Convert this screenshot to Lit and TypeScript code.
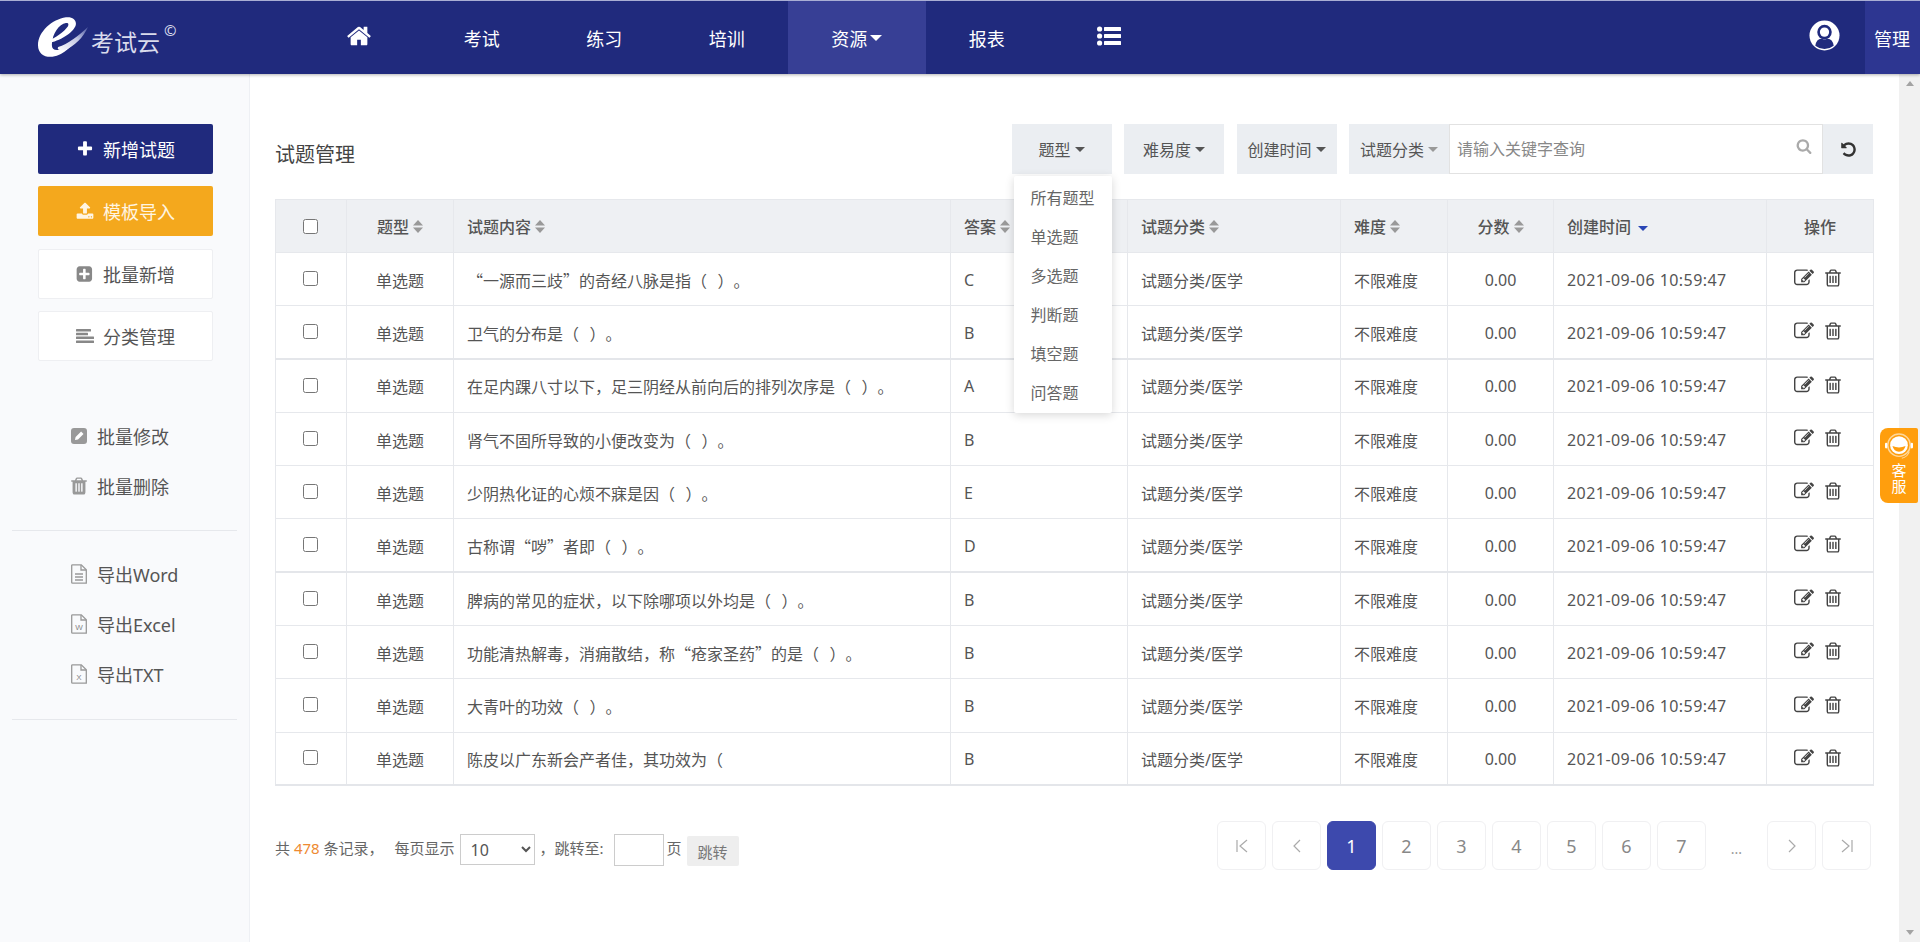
import { LitElement, html, css, svg } from 'lit';
import { customElement } from 'lit/decorators.js';

const fa = (d: string, cls = '') => html`<svg class=${cls} viewBox="0 0 1792 1792" fill="currentColor"><path d=${d}></path></svg>`;

const HOME = 'M1472 992v480q0 26-19 45t-45 19h-384v-384h-256v384h-384q-26 0-45-19t-19-45v-480q0-1 .5-3t.5-3l575-474 575 474q1 2 1 6zm223-69l-62 74q-8 9-21 11h-3q-13 0-21-7l-692-577-692 577q-12 8-24 7-13-2-21-11l-62-74q-8-10-7-23.500t11-21.500l719-599q32-26 76-26t76 26l244 204v-195q0-14 9-23t23-9h192q14 0 23 9t9 23v408l219 182q10 8 11 21.500t-7 23.500z';
const EDIT = 'M888 1184l116-116-152-152-116 116v56h96v96h56zm440-720q-16-16-33 1l-350 350q-17 17-1 33t33-1l350-350q17-17 1-33zm80 594v190q0 119-84.500 203.500t-203.500 84.500h-832q-119 0-203.500-84.500t-84.500-203.500v-832q0-119 84.500-203.500t203.500-84.500h832q63 0 117 25 15 7 18 23 3 17-9 29l-49 49q-14 14-32 8-23-6-45-6h-832q-66 0-113 47t-47 113v832q0 66 47 113t113 47h832q66 0 113-47t47-113v-126q0-13 9-22l64-64q15-15 35-7t20 29zm-96-738l288 288-672 672h-288v-288zm444 132l-92 92-288-288 92-92q28-28 68-28t68 28l152 152q28 28 28 68t-28 68z';
const TRASH_O = 'M704 736v576q0 14-9 23t-23 9h-64q-14 0-23-9t-9-23v-576q0-14 9-23t23-9h64q14 0 23 9t9 23zm256 0v576q0 14-9 23t-23 9h-64q-14 0-23-9t-9-23v-576q0-14 9-23t23-9h64q14 0 23 9t9 23zm256 0v576q0 14-9 23t-23 9h-64q-14 0-23-9t-9-23v-576q0-14 9-23t23-9h64q14 0 23 9t9 23zm128 724v-948h-896v948q0 22 7 40.500t14.500 27 10.500 8.500h832q3 0 10.500-8.500t14.500-27 7-40.500zm-672-1076h448l-48-117q-7-9-17-11h-317q-10 2-17 11zm928 32v64q0 14-9 23t-23 9h-96v948q0 83-47 143.500t-113 60.500h-832q-66 0-113-58.500t-47-141.500v-952h-96q-14 0-23-9t-9-23v-64q0-14 9-23t23-9h309l70-167q15-37 54-63t79-26h320q40 0 79 26t54 63l70 167h309q14 0 23 9t9 23z';
const TRASH = 'M704 1376v-704q0-14-9-23t-23-9h-64q-14 0-23 9t-9 23v704q0 14 9 23t23 9h64q14 0 23-9t9-23zm256 0v-704q0-14-9-23t-23-9h-64q-14 0-23 9t-9 23v704q0 14 9 23t23 9h64q14 0 23-9t9-23zm256 0v-704q0-14-9-23t-23-9h-64q-14 0-23 9t-9 23v704q0 14 9 23t23 9h64q14 0 23-9t9-23zm-544-992h448l-48-117q-7-9-17-11h-317q-10 2-17 11zm928 32v64q0 14-9 23t-23 9h-96v948q0 83-47 143.500t-113 60.500h-832q-66 0-113-58.500t-47-141.500v-952h-96q-14 0-23-9t-9-23v-64q0-14 9-23t23-9h309l70-167q15-37 54-63t79-26h320q40 0 79 26t54 63l70 167h309q14 0 23 9t9 23z';
const PLUS = 'M1600 736v192q0 40-28 68t-68 28h-416v416q0 40-28 68t-68 28h-192q-40 0-68-28t-28-68v-416h-416q-40 0-68-28t-28-68v-192q0-40 28-68t68-28h416v-416q0-40 28-68t68-28h192q40 0 68 28t28 68v416h416q40 0 68 28t28 68z';
const UPLOAD = 'M1344 1472q0-26-19-45t-45-19-45 19-19 45 19 45 45 19 45-19 19-45zm256 0q0-26-19-45t-45-19-45 19-19 45 19 45 45 19 45-19 19-45zm128-224v320q0 40-28 68t-68 28h-1472q-40 0-68-28t-28-68v-320q0-40 28-68t68-28h427q21 56 70.500 92t110.500 36h256q61 0 110.500-36t70.500-92h427q40 0 68 28t28 68zm-325-648q-17 40-59 40h-256v448q0 26-19 45t-45 19h-256q-26 0-45-19t-19-45v-448h-256q-42 0-59-40-17-39 14-69l448-448q18-19 45-19t45 19l448 448q31 30 14 69z';
const PLUS_SQ = 'M1344 960v-128q0-26-19-45t-45-19h-320v-320q0-26-19-45t-45-19h-128q-26 0-45 19t-19 45v320h-320q-26 0-45 19t-19 45v128q0 26 19 45t45 19h320v320q0 26 19 45t45 19h128q26 0 45-19t19-45v-320h320q26 0 45-19t19-45zm256-544v960q0 119-84.500 203.500t-203.500 84.500h-960q-119 0-203.500-84.500t-84.500-203.500v-960q0-119 84.500-203.500t203.500-84.500h960q119 0 203.500 84.500t84.500 203.500z';
const SEARCH = 'M1216 832q0-185-131.500-316.500t-316.500-131.500-316.500 131.500-131.500 316.500 131.500 316.500 316.500 131.500 316.500-131.500 131.500-316.500zm512 832q0 52-38 90t-90 38q-54 0-90-38l-343-342q-179 124-399 124-143 0-273.500-55.500t-225-150-150-225-55.500-273.500 55.500-273.500 150-225 225-150 273.500-55.500 273.500 55.500 225 150 150 225 55.500 273.500q0 220-124 399l343 343q37 37 37 90z';
const UNDO = 'M1664 896q0 156-61 298t-164 245-245 164-298 61q-172 0-327-72.500t-264-204.500q-7-10-6.500-22.500t8.500-20.500l137-138q10-9 25-9 16 2 23 12 73 95 179 147t225 52q104 0 198.500-40.500t163.500-109.500 109.500-163.500 40.500-198.500-40.500-198.500-109.500-163.500-163.500-109.500-198.500-40.500q-98 0-188 35.500t-160 101.500l137 138q31 30 14 69-17 40-59 40h-448q-26 0-45-19t-19-45v-448q0-42 40-59 39-17 69 14l130 129q107-101 244.500-156.500t284.500-55.500q156 0 298 61t245 164 164 245 61 298z';

const listIcon = html`<svg class="i-list" viewBox="0 0 24 20" fill="currentColor">
  <circle cx="2.600" cy="3" r="2.600"></circle><circle cx="2.600" cy="10" r="2.600"></circle><circle cx="2.600" cy="17" r="2.600"></circle>
  <rect x="7" y="1" width="17" height="4" rx=".6"></rect><rect x="7" y="8" width="17" height="4" rx=".6"></rect><rect x="7" y="15" width="17" height="4" rx=".6"></rect>
</svg>`;

const userIcon = html`<svg class="i-user" viewBox="0 0 32 32">
  <circle cx="16" cy="16" r="15.500" fill="#fff"></circle>
  <circle cx="16" cy="12.500" r="7.500" fill="#202a7d"></circle>
  <circle cx="16" cy="12.500" r="4.800" fill="#fff"></circle>
  <path d="M6.500 26.500q1-7 6.500-7.500 3 2 6 0 5.500.5 6.500 7.500-4.500 3.500-9.500 3.500t-9.500-3.500z" fill="#202a7d"></path>
</svg>`;

const alignIcon = html`<svg class="i-side" viewBox="0 0 18 14" fill="currentColor" style="height:14px">
  <rect width="15" height="2.400" rx=".5"></rect><rect y="3.800" width="12" height="2.400" rx=".5"></rect><rect y="7.600" width="18" height="2.400" rx=".5"></rect><rect y="11.500" width="18" height="2.400" rx=".5"></rect>
</svg>`;

const pencilBoxIcon = html`<svg class="i-link" viewBox="0 0 16 16">
  <rect width="16" height="16" rx="3" fill="#999"></rect>
  <path d="M4 12l.6-3 5.500-5.500 2.400 2.400L7 11.400z" fill="#fff"></path>
</svg>`;

const fileIcon = (inner: unknown) => html`<svg class="i-link i-file" viewBox="0 0 16 20">
  <path d="M1.500.8h8.800l5 5v13.400H1.500a.8.800 0 0 1-.8-.8V1.600a.8.800 0 0 1 .8-.8z" fill="none" stroke="#999" stroke-width="1.300"></path>
  <path d="M10 1v5h5" fill="none" stroke="#999" stroke-width="1.300"></path>
  ${inner}
</svg>`;

const wordLines = svg`<path d="M4 10h8M4 13h8M4 16h8" stroke="#999" stroke-width="1.300"></path>`;
const letter = (c: string) => svg`<text x="8" y="16" font-size="8" font-family="Liberation Sans, sans-serif" text-anchor="middle" fill="#888">${c}</text>`;

const logo = html`<svg class="logo-e" viewBox="0 0 52 42">
  <defs><linearGradient id="sw" x1="0" x2="1" y1="1" y2="0"><stop offset="0" stop-color="#fff"></stop><stop offset=".55" stop-color="#c4c8e4"></stop><stop offset="1" stop-color="#4a55a0"></stop></linearGradient></defs>
  <path d="M9 27C19 26 35 18 39 9 41 3 36-1 29 0 15 2 0 15 0 29c0 9 7 13 15 12 13-2 21-12 25-20-6 7-13 12-19 13-5 .5-7-2-6.500-6.500C15 17 22 7 29 6c3-.5 3 1.500 2 3.500C27 15 18 22 9 25z" fill="#fff"></path>
  <path d="M21 31c10-3 21-12 31-21-5 11-14 20-24 24-4 1-9 0-7-3z" fill="url(#sw)"></path>
</svg>`;

const kefuIcon = html`<svg class="kefu-i" viewBox="0 0 32 30">
  <circle cx="16" cy="13" r="12" fill="none" stroke="#ffd79a" stroke-width="1.500"></circle>
  <circle cx="16" cy="13" r="9.500" fill="#fff"></circle>
  <path d="M9 14q7 3 14 0-1.500 6-7 6t-7-6z" fill="#ff9e0d"></path>
  <rect x="1" y="10.500" width="2.500" height="6" rx="1.200" fill="#fff"></rect>
  <rect x="28.500" y="10.500" width="2.500" height="6" rx="1.200" fill="#fff"></rect>
  <path d="M27 20q-2 6-8 7" fill="none" stroke="#ffd79a" stroke-width="1.200"></path>
</svg>`;

const sortIcon = html`<svg class="sort" viewBox="0 0 10 13" fill="#999"><path d="M5 0l5 5.500H0z"></path><path d="M5 13l5-5.500H0z"></path></svg>`;

const pagerArrow = (d: string) => html`<svg class="pg-i" viewBox="0 0 16 16" fill="none" stroke="#aaa" stroke-width="1.200"><path d=${d}></path></svg>`;

const QUESTIONS: [string, string][] = [
  ['“一源而三歧”的奇经八脉是指（ ）。', 'C'],
  ['卫气的分布是（ ）。', 'B'],
  ['在足内踝八寸以下，足三阴经从前向后的排列次序是（ ）。', 'A'],
  ['肾气不固所导致的小便改变为（ ）。', 'B'],
  ['少阴热化证的心烦不寐是因（ ）。', 'E'],
  ['古称谓“哕”者即（ ）。', 'D'],
  ['脾病的常见的症状，以下除哪项以外均是（ ）。', 'B'],
  ['功能清热解毒，消痈散结，称“疮家圣药”的是（ ）。', 'B'],
  ['大青叶的功效（ ）。', 'B'],
  ['陈皮以广东新会产者佳，其功效为（', 'B'],
];

@customElement('app-root')
export class AppRoot extends LitElement {
  static styles = css`
    :host {
      display: block;
      height: 100vh;
      overflow: hidden;
      font-family: "Noto Sans", "Noto Sans CJK SC", sans-serif;
      font-size: 16px;
      color: #555;
      background: #fff;
      text-spacing-trim: space-all;
    }
    svg { display: block; flex: none; }

    .top {
      height: 74px;
      box-sizing: border-box;
      border-top: 1px solid #a9aed4;
      background: #202a7d;
      color: #fff;
      display: flex;
      align-items: stretch;
      box-shadow: 0 1px 3px rgba(0, 0, 0, .3);
      position: relative;
      z-index: 2;
    }
    .brand {
      width: 298px;
      box-sizing: border-box;
      padding: 16px 0 0 38px;
      display: flex;
      align-items: flex-start;
    }
    .logo-e { width: 50px; height: 41px; }
    .brand-name {
      font-size: 23px;
      line-height: 1;
      color: #d9dbec;
      margin: 14px 0 0 3px;
      white-space: nowrap;
    }
    .brand-c { font-size: 15px; line-height: 1; color: #d9dbec; margin: 6px 0 0 4px; }
    .nav { display: flex; flex: 1; }
    .nav a {
      width: 122.500px;
      display: flex;
      align-items: center;
      justify-content: center;
      font-size: 18px;
      gap: 3px;
    }
    .nav a.on { width: 137.500px; background: #373f95; }
    .caret { width: 0; height: 0; border: 6px solid transparent; border-top-color: currentColor; border-bottom: 0; }
    .caret.sm { border-width: 5px 5px 0; }
    .i-home { width: 26px; height: 26px; margin-top: -4px; }
    .i-list { width: 24px; height: 20px; margin-top: -4px; }
    .user { width: 82px; display: flex; align-items: center; justify-content: center; padding-bottom: 5px; }
    .i-user { width: 31px; height: 31px; }
    .manage {
      width: 55px;
      background: #2d3691;
      display: flex;
      align-items: center;
      padding-left: 9px;
      box-sizing: border-box;
      font-size: 18px;
    }

    .body { display: flex; height: 868px; }

    .side {
      width: 250px;
      box-sizing: border-box;
      flex: none;
      background: #f9fafc;
      border-right: 1px solid #eef0f4;
      padding: 50px 12px 0;
    }
    .btns { display: flex; flex-direction: column; gap: 12.400px; padding-left: 26px; }
    .btn {
      width: 175px;
      height: 50px;
      box-sizing: border-box;
      border-radius: 2px;
      display: flex;
      align-items: center;
      justify-content: center;
      gap: 9px;
      font-size: 18px;
    }
    .btn.navy { background: #202a7d; color: #fff; }
    .btn.orange { background: #f4a81d; color: #fff5e2; }
    .btn.plain { background: #fff; border: 1px solid #eeeff2; color: #555; }
    .btn svg { width: 18px; height: 18px; }
    .btn.plain svg { color: #888; }
    .group { margin-top: 50px; padding-bottom: 19px; border-bottom: 1px solid #e6e8ec; }
    .group + .group { margin-top: 18px; padding-bottom: 20px; }
    .link {
      height: 50px;
      display: flex;
      align-items: center;
      gap: 10px;
      padding-left: 59px;
      font-size: 18px;
      color: #555;
    }
    .i-link { width: 16px; height: 16px; color: #999; }
    .i-trash { width: 20px; height: 20px; margin: 0 -2px; }
    .i-file { height: 20px; }

    .main { flex: 1; min-width: 0; padding: 50px 26px 0 25px; }
    .tools { display: flex; align-items: center; height: 50px; }
    .title { font-size: 20px; color: #444; flex: 1; padding-top: 8px; }
    .filter {
      position: relative;
      width: 100px;
      height: 50px;
      margin-right: 12.500px;
      background: #ebeef2;
      display: flex;
      align-items: center;
      justify-content: center;
      gap: 4px;
      color: #555;
    }
    .menu {
      position: absolute;
      top: 52px;
      left: 2px;
      width: 98px;
      box-sizing: border-box;
      padding: 3px 0 0;
      background: #fff;
      border-radius: 2px;
      box-shadow: 0 2px 10px rgba(0, 0, 0, .16);
      z-index: 3;
    }
    .menu div { height: 39px; line-height: 39px; padding-left: 17px; color: #666; }
    .search { display: flex; height: 50px; }
    .search .filter { margin-right: 0; }
    .search .filter .caret { color: #999; }
    .kw { position: relative; width: 374px; }
    .kw input {
      width: 100%;
      height: 100%;
      box-sizing: border-box;
      border: 1px solid #e2e2e2;
      padding: 0 40px 0 7px;
      font: inherit;
      outline: none;
    }
    .kw input::placeholder { color: #888; }
    .kw svg { position: absolute; right: 11px; top: 14px; width: 16px; height: 16px; color: #aaa; }
    .reset { width: 50px; background: #ebeef2; display: flex; align-items: center; justify-content: center; color: #333; }
    .reset svg { width: 17px; height: 17px; }

    table { width: 100%; margin-top: 25px; border-collapse: collapse; table-layout: fixed; border-bottom: 2px solid #e4e6ea; }
    th, td { border: 1px solid #e6e8ec; padding: 0 13px; text-align: left; font-weight: 400; white-space: nowrap; overflow: hidden; }
    th { height: 52px; background: #eef0f3; color: #555; font-weight: 500; }
    td { height: 53.300px; color: #555; padding-top: 1px; box-sizing: border-box; }
    td.q { font-family: "Noto Sans CJK SC", sans-serif; word-spacing: 7px; }
    tr.thick td { border-bottom: 2px solid #e4e6ea; }
    th span { display: inline-flex; align-items: center; gap: 4px; }
    .sort { width: 10px; height: 13px; }
    .down { width: 0; height: 0; border: 5px solid transparent; border-top-color: #2a46b5; border-bottom: 0; margin: 5px 0 0 3px; }
    .c { text-align: center; }
    th.chk, td.chk { padding: 0 1px 0 0; text-align: center; }
    td.chk { padding-bottom: 5px; }
    input[type=checkbox] { width: 15px; height: 15px; margin: 0; vertical-align: middle; }
    th.chk input[type=checkbox] { margin-bottom: 2px; }
    .date { letter-spacing: .45px; }
    .ops { display: flex; justify-content: center; align-items: center; gap: 9px; color: #444; margin-top: -3px; padding-right: 4px; }
    .ops svg { width: 20px; height: 20px; }

    .foot { display: flex; justify-content: space-between; margin-top: 35px; height: 49px; }
    .info { display: flex; align-items: flex-start; font-size: 15px; color: #666; height: 33px; white-space: nowrap; }
    .info > * { flex: none; }
    .info .txt { line-height: 33px; margin-top: 11px; }
    .info .gap { margin-left: 11px; }
    .info b { font-weight: 400; color: #ee8a32; }
    .info select {
      width: 75px; height: 31px; margin: 13px 5px 0 5px; border: 1px solid #ccc; background: #fff;
      font: inherit; font-size: 16px; color: #555; padding-left: 6px;
    }
    .info input {
      width: 50px; height: 32px; margin: 13px 3px 0 10px; box-sizing: border-box; border: 1px solid #ccc; outline: none;
    }
    .info button {
      width: 52px; height: 30px; margin: 15px 0 0 5px; border: 0; border-radius: 2px; background: #eee;
      font: inherit; color: #777;
    }
    .pager { display: flex; gap: 6px; padding-right: 2px; }
    .pager a {
      width: 49px;
      height: 49px;
      box-sizing: border-box;
      border: 1px solid #f0f0f2;
      border-radius: 6px;
      display: flex;
      align-items: center;
      justify-content: center;
      font-size: 18px;
      color: #888;
    }
    .pager a.on { background: #3d49ad; border-color: #3d49ad; color: #fff; }
    .pager a.dots { border: 0; color: #999; font-size: 14px; padding-top: 6px; }
    .pg-i { width: 16px; height: 16px; }

    .bar { width: 21px; flex: none; background: #f1f1f1; display: flex; flex-direction: column; justify-content: space-between; align-items: center; padding: 7px 0; box-sizing: border-box; }
    .bar i { width: 0; height: 0; border: 4px solid transparent; }
    .bar i.u { border-bottom: 5px solid #a3a3a3; border-top: 0; }
    .bar i.d { border-top: 5px solid #a3a3a3; border-bottom: 0; }

    .kefu {
      position: absolute;
      left: 1880px;
      top: 428px;
      width: 38px;
      height: 75px;
      box-sizing: border-box;
      background: #ff9e0d;
      border-radius: 8px 2px 2px 8px;
      color: #fff;
      font-size: 15px;
      line-height: 16px;
      text-align: center;
      padding-top: 5px;
      z-index: 4;
    }
    .kefu-i { width: 30px; height: 28px; margin: 0 auto 1px; }
  `;

  render() {
    return html`
      <div class="top">
        <div class="brand">${logo}<span class="brand-name">考试云</span><span class="brand-c">©</span></div>
        <nav class="nav">
          <a>${fa(HOME, 'i-home')}</a>
          <a>考试</a><a>练习</a><a>培训</a>
          <a class="on">资源<i class="caret"></i></a>
          <a>报表</a>
          <a>${listIcon}</a>
        </nav>
        <div class="user">${userIcon}</div>
        <div class="manage">管理</div>
      </div>
      <div class="body">
        <aside class="side">
          <div class="btns">
            <div class="btn navy">${fa(PLUS)}新增试题</div>
            <div class="btn orange">${fa(UPLOAD)}模板导入</div>
            <div class="btn plain">${fa(PLUS_SQ)}批量新增</div>
            <div class="btn plain">${alignIcon}分类管理</div>
          </div>
          <div class="group">
            <div class="link">${pencilBoxIcon}批量修改</div>
            <div class="link">${fa(TRASH, 'i-link i-trash')}批量删除</div>
          </div>
          <div class="group">
            <div class="link">${fileIcon(wordLines)}导出Word</div>
            <div class="link">${fileIcon(letter('W'))}导出Excel</div>
            <div class="link">${fileIcon(letter('X'))}导出TXT</div>
          </div>
        </aside>
        <main class="main">
          <div class="tools">
            <div class="title">试题管理</div>
            <div class="filter">题型<i class="caret sm"></i>
              <div class="menu">
                ${['所有题型', '单选题', '多选题', '判断题', '填空题', '问答题'].map((m) => html`<div>${m}</div>`)}
              </div>
            </div>
            <div class="filter">难易度<i class="caret sm"></i></div>
            <div class="filter">创建时间<i class="caret sm"></i></div>
            <div class="search">
              <div class="filter">试题分类<i class="caret sm"></i></div>
              <div class="kw"><input placeholder="请输入关键字查询" />${fa(SEARCH)}</div>
              <div class="reset">${fa(UNDO)}</div>
            </div>
          </div>
          <table>
            <colgroup>
              <col style="width:71px" /><col style="width:107px" /><col style="width:497px" /><col style="width:177px" />
              <col style="width:213px" /><col style="width:107px" /><col style="width:106px" /><col style="width:213px" /><col style="width:107px" />
            </colgroup>
            <thead>
              <tr>
                <th class="chk"><input type="checkbox" /></th>
                <th class="c"><span>题型${sortIcon}</span></th>
                <th><span>试题内容${sortIcon}</span></th>
                <th><span>答案${sortIcon}</span></th>
                <th><span>试题分类${sortIcon}</span></th>
                <th><span>难度${sortIcon}</span></th>
                <th class="c"><span>分数${sortIcon}</span></th>
                <th><span>创建时间<i class="down"></i></span></th>
                <th class="c">操作</th>
              </tr>
            </thead>
            <tbody>
              ${QUESTIONS.map(([q, a], i) => html`
                <tr class=${i === 1 || i === 5 ? 'thick' : ''}>
                  <td class="chk"><input type="checkbox" /></td>
                  <td class="c">单选题</td>
                  <td class="q">${q}</td>
                  <td>${a}</td>
                  <td>试题分类/医学</td>
                  <td>不限难度</td>
                  <td class="c">0.00</td>
                  <td class="date">2021-09-06 10:59:47</td>
                  <td><div class="ops">${fa(EDIT)}${fa(TRASH_O)}</div></td>
                </tr>`)}
            </tbody>
          </table>
          <div class="foot">
            <div class="info">
              <span class="txt">共 <b>478</b> 条记录，<span class="gap">每页显示</span></span>
              <select><option>10</option><option>20</option></select>
              <span class="txt">，跳转至:</span>
              <input />
              <span class="txt">页</span>
              <button>跳转</button>
            </div>
            <div class="pager">
              <a>${pagerArrow('M3 2v12M13 2L6 8l7 6')}</a>
              <a>${pagerArrow('M11 2L5 8l6 6')}</a>
              <a class="on">1</a><a>2</a><a>3</a><a>4</a><a>5</a><a>6</a><a>7</a>
              <a class="dots">...</a>
              <a>${pagerArrow('M5 2l6 6-6 6')}</a>
              <a>${pagerArrow('M3 2l7 6-7 6M13 2v12')}</a>
            </div>
          </div>
        </main>
        <div class="bar"><i class="u"></i><i class="d"></i></div>
      </div>
      <div class="kefu">${kefuIcon}客<br />服</div>
    `;
  }
}
